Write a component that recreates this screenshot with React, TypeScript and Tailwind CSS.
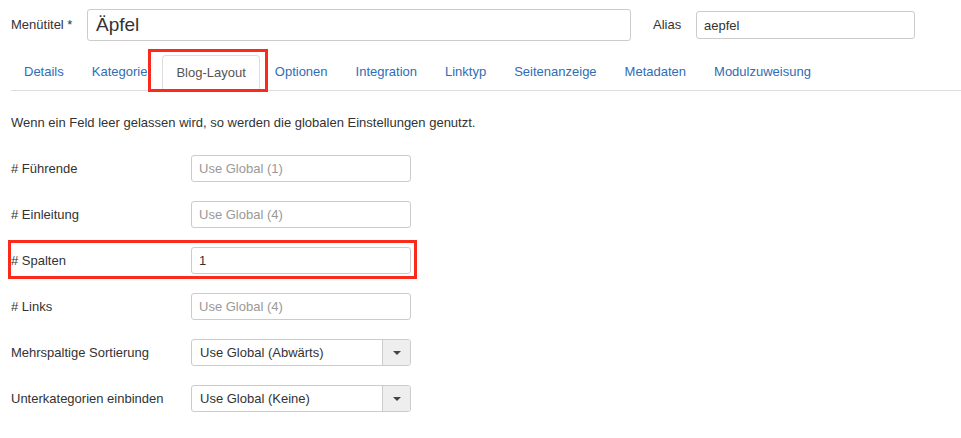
import React from 'react';

const tabs = ['Details', 'Kategorie', 'Blog-Layout', 'Optionen', 'Integration', 'Linktyp', 'Seitenanzeige', 'Metadaten', 'Modulzuweisung'];

function TextRow({ label, value, placeholder, marked }: { label: string; value?: string; placeholder?: string; marked?: boolean }) {
  return (
    <div className="relative flex items-center h-[27px]">
      <div className="w-[180px] text-[13px] text-[#333]">{label}</div>
      <input
        readOnly
        value={value ?? ''}
        placeholder={placeholder}
        className="w-[220px] h-[27px] border border-[#ccc] rounded-[3px] px-[7px] text-[13px] text-[#333] placeholder:text-[#999] bg-white outline-none"
      />
      {marked && (
        <span className="absolute left-[-3px] top-[-7px] w-[409px] h-[39px] border-[3px] border-[#fa2b1c] pointer-events-none" />
      )}
    </div>
  );
}

function SelectRow({ label, value }: { label: string; value: string }) {
  return (
    <div className="flex items-center h-[27px]">
      <div className="w-[180px] text-[13px] text-[#333]">{label}</div>
      <div className="w-[220px] h-[27px] border border-[#ccc] rounded-[3px] flex bg-white overflow-hidden">
        <div className="flex-1 flex items-center pl-[8px] text-[13px] text-[#333]">{value}</div>
        <div className="w-[28px] border-l border-[#ccc] bg-[#eee] flex items-center justify-center">
          <span className="w-0 h-0 border-l-[4px] border-r-[4px] border-t-[4px] border-l-transparent border-r-transparent border-t-[#444]" />
        </div>
      </div>
    </div>
  );
}

export default function App() {
  return (
    <div className="w-[961px] h-[438px] bg-white font-['Liberation_Sans',Arial,sans-serif] text-[#333] overflow-hidden">
      {/* title row */}
      <div className="flex items-center pt-[9px] pl-[11px]">
        <div className="w-[76px] text-[13px]">Menütitel *</div>
        <input
          readOnly
          value="Äpfel"
          className="w-[544px] h-[32px] border border-[#ccc] rounded-[3px] px-[8px] text-[19px] text-[#333] outline-none"
        />
        <div className="ml-[22px] w-[43px] text-[13px]">Alias</div>
        <input
          readOnly
          value="aepfel"
          className="w-[219px] h-[28px] border border-[#ccc] rounded-[3px] px-[7px] text-[13px] text-[#333] outline-none"
        />
      </div>

      {/* tabs */}
      <div className="mt-[14px] ml-[11px] flex items-end border-b border-[#ddd] h-[36px]">
        {tabs.map((t) =>
          t === 'Blog-Layout' ? (
            <div key={t} className="relative mr-[2px] -mb-px">
              <div className="h-[36px] px-[13px] flex items-center border border-[#ddd] border-b-white rounded-t-[4px] bg-white text-[13px] text-[#555]">
                {t}
              </div>
              <span className="absolute left-[-14px] top-[-6px] w-[120px] h-[43px] border-[3px] border-[#fa2b1c] pointer-events-none" />
            </div>
          ) : (
            <div key={t} className="h-[36px] px-[13px] mr-[2px] flex items-center text-[13px] text-[#2f6db5]">
              {t}
            </div>
          )
        )}
      </div>

      {/* description */}
      <p className="mt-[24px] ml-[11px] text-[13px] leading-[16px]">
        Wenn ein Feld leer gelassen wird, so werden die globalen Einstellungen genutzt.
      </p>

      <div className="mt-[24px] ml-[11px] flex flex-col gap-[19px]">
        <TextRow label="# Führende" placeholder="Use Global (1)" />
        <TextRow label="# Einleitung" placeholder="Use Global (4)" />
        <TextRow label="# Spalten" value="1" marked />
        <TextRow label="# Links" placeholder="Use Global (4)" />
        <SelectRow label="Mehrspaltige Sortierung" value="Use Global (Abwärts)" />
        <SelectRow label="Unterkategorien einbinden" value="Use Global (Keine)" />
      </div>
    </div>
  );
}
